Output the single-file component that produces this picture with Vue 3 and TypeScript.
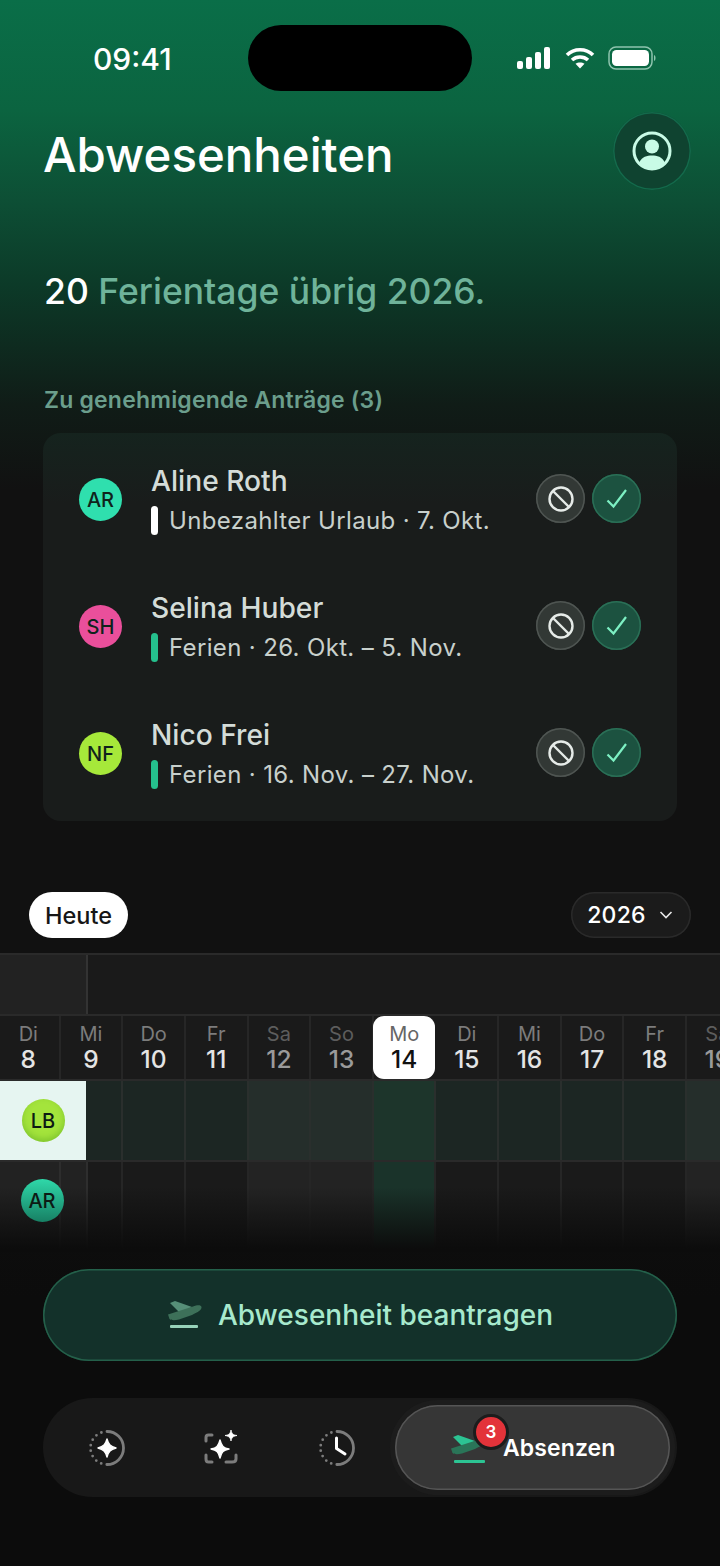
<script setup lang="ts">
interface Req { ini: string; name: string; sub: string; color: string; bar: string }
const requests: Req[] = [
  { ini: 'AR', name: 'Aline Roth', sub: 'Unbezahlter Urlaub · 7. Okt.', color: '#2fdfae', bar: '#ffffff' },
  { ini: 'SH', name: 'Selina Huber', sub: 'Ferien · 26. Okt. – 5. Nov.', color: '#ea4f9b', bar: '#25c08d' },
  { ini: 'NF', name: 'Nico Frei', sub: 'Ferien · 16. Nov. – 27. Nov.', color: '#a6e83a', bar: '#25c08d' },
]
interface Day { w: string; d: string; end?: boolean; today?: boolean }
const days: Day[] = [
  { w: 'Di', d: '8' }, { w: 'Mi', d: '9' }, { w: 'Do', d: '10' }, { w: 'Fr', d: '11' },
  { w: 'Sa', d: '12', end: true }, { w: 'So', d: '13', end: true }, { w: 'Mo', d: '14', today: true },
  { w: 'Di', d: '15' }, { w: 'Mi', d: '16' }, { w: 'Do', d: '17' }, { w: 'Fr', d: '18' }, { w: 'Sa', d: '19', end: true },
]
</script>

<template>
  <div class="page">
    <div class="status">
      <span class="time">09:41</span>
      <div class="island"></div>
      <div class="sys">
        <svg width="36" height="22" viewBox="0 0 36 22" fill="#fff"><rect x="1" y="14" width="6" height="8" rx="2"/><rect x="10" y="10" width="6" height="12" rx="2"/><rect x="19" y="5" width="6" height="17" rx="2"/><rect x="28" y="0" width="6" height="22" rx="2"/></svg>
        <svg width="30" height="22" viewBox="0 0 30 22" fill="none" stroke="#fff" stroke-width="3.6"><path d="M2 8 C9 1 21 1 28 8"/><path d="M7 13 C11.500 9 18.500 9 23 13"/><path d="M15 21.500 L10.500 16.800 C13 15 17 15 19.500 16.800 Z" fill="#fff" stroke="none"/></svg>
        <svg width="49" height="24" viewBox="0 0 49 24" fill="none"><rect x="1" y="1" width="43" height="22" rx="7" stroke="#8fc4ae" stroke-width="1.500"/><rect x="4" y="4" width="37" height="16" rx="4.500" fill="#fff"/><path d="M46 9 C48 9.500 48 14.500 46 15 Z" fill="#8fc4ae"/></svg>
      </div>
    </div>

    <header class="head">
      <h1>Abwesenheiten</h1>
      <button class="profile">
        <svg width="42" height="42" viewBox="0 0 42 42" fill="none"><circle cx="21" cy="21" r="18" stroke="#c8fbe6" stroke-width="3"/><circle cx="21" cy="16.500" r="7" fill="#c8fbe6"/><path d="M8 33 C11 26.500 16 25.500 21 25.500 C26 25.500 31 26.500 34 33 C30 37.500 25.500 39 21 39 C16.500 39 12 37.500 8 33 Z" fill="#c8fbe6"/></svg>
      </button>
    </header>

    <p class="left"><b>20</b> Ferientage übrig 2026.</p>

    <h2 class="label">Zu genehmigende Anträge (3)</h2>
    <section class="card">
      <div v-for="r in requests" :key="r.ini" class="req">
        <span class="av" :style="{ background: r.color }">{{ r.ini }}</span>
        <div class="info">
          <div class="name">{{ r.name }}</div>
          <div class="sub"><i :style="{ background: r.bar }"></i>{{ r.sub }}</div>
        </div>
        <button class="act deny">
          <svg width="28" height="28" viewBox="0 0 28 28" fill="none" stroke="#e6ebe8" stroke-width="2.400"><circle cx="14" cy="14" r="11.500"/><path d="M6 6 L22 22"/></svg>
        </button>
        <button class="act ok">
          <svg width="28" height="28" viewBox="0 0 28 28" fill="none" stroke="#7df0c3" stroke-width="2.200"><path d="M4.500 15.500 L10.500 21.500 L23 5"/></svg>
        </button>
      </div>
    </section>

    <div class="tools">
      <button class="today">Heute</button>
      <button class="year">2026
        <svg width="14" height="10" viewBox="0 0 14 10" fill="none" stroke="#e8e8e8" stroke-width="1.600"><path d="M1.500 2 L7 7.500 L12.500 2"/></svg>
      </button>
    </div>

    <section class="cal">
      <div class="cal-top"><div class="cal-corner"></div></div>
      <div class="grid head-row">
        <div v-for="d in days" :key="d.d" class="day" :class="{ end: d.end, now: d.today }">
          <span class="w">{{ d.w }}</span><span class="n">{{ d.d }}</span>
        </div>
      </div>
      <div class="row-wrap first">
        <div class="grid body-row">
          <div v-for="d in days" :key="d.d" class="cell" :class="{ end: d.end, now: d.today }"></div>
        </div>
        <div class="pin light"><span class="av small lime">LB</span></div>
      </div>
      <div class="row-wrap second">
        <div class="grid body-row">
          <div v-for="d in days" :key="d.d" class="cell" :class="{ end: d.end, now: d.today }"></div>
        </div>
        <div class="pin"><span class="av small teal">AR</span></div>
      </div>
      <div class="fade"></div>
    </section>

    <button class="cta">
      <svg width="36" height="28" viewBox="0 0 36 28" fill="none"><path d="M3 2 L8 0 L25 6 L13 12 Z" fill="#568f78"/><path d="M1 13.500 L26 5.500 C30 4 34 3.500 34.500 6 C35 9 30 11.500 25 14 L12 18.500 C8 19.500 4 19.500 2.500 18 Z" fill="#3d7059"/><rect x="3" y="24" width="28" height="3" rx="1" fill="#97d3ba"/></svg>
      Abwesenheit beantragen
    </button>

    <nav class="nav">
      <div class="tab">
        <svg width="36" height="36" viewBox="0 0 36 36" fill="none">
          <path d="M18 1.500 A16.500 16.500 0 0 1 18 34.500" stroke="#7c7c7c" stroke-width="2.800"/>
          <path d="M18 1.500 A16.500 16.500 0 0 0 18 34.500" stroke="#7c7c7c" stroke-width="2.800" stroke-linecap="round" stroke-dasharray="0 5.700"/>
          <path d="M18 9 C19.500 14.500 21.500 16.500 27 18 C21.500 19.500 19.500 21.500 18 27 C16.500 21.500 14.500 19.500 9 18 C14.500 16.500 16.500 14.500 18 9 Z" fill="#fff" stroke="#fff" stroke-width="1.400" stroke-linejoin="round"/>
        </svg>
      </div>
      <div class="tab">
        <svg width="36" height="36" viewBox="0 0 36 36" fill="none">
          <path d="M8 5 H4.500 Q2 5 2 7.500 V11 M2 25 V29 Q2 32 4.500 32 H8 M22 32 H28 Q32 32 32 29 V25" stroke="#7c7c7c" stroke-width="3" stroke-linecap="round"/>
          <path d="M16 10 C17.500 16 19.500 18 25 19 C19.500 20 17.500 22 16 28 C14.500 22 12.500 20 7 19 C12.500 18 14.500 16 16 10 Z" fill="#fff" stroke="#fff" stroke-width="1.400" stroke-linejoin="round"/>
          <path d="M27 0 C27.600 3.500 29 5 33 5.500 C29 6.200 27.600 7.500 27 11 C26.400 7.500 25 6.200 21 5.500 C25 5 26.400 3.500 27 0 Z" fill="#fff" stroke="#fff" stroke-width="0.800" stroke-linejoin="round"/>
        </svg>
      </div>
      <div class="tab">
        <svg width="36" height="36" viewBox="0 0 36 36" fill="none">
          <path d="M18 1.500 A16.500 16.500 0 0 1 18 34.500" stroke="#7c7c7c" stroke-width="2.800"/>
          <path d="M18 1.500 A16.500 16.500 0 0 0 18 34.500" stroke="#7c7c7c" stroke-width="2.800" stroke-linecap="round" stroke-dasharray="0 5.700"/>
          <path d="M17.500 8 V18.500 L26 24" stroke="#fff" stroke-width="3" stroke-linecap="round" stroke-linejoin="round"/>
        </svg>
      </div>
      <div class="tab active">
        <div class="plane">
          <svg width="36" height="30" viewBox="0 0 36 30" fill="none"><path d="M3 2 L8 0 L25 6 L13 12 Z" fill="#2cc493"/><path d="M1 13.500 L26 5.500 C30 4 34 3.500 34.500 6 C35 9 30 11.500 25 14 L12 18.500 C8 19.500 4 19.500 2.500 18 Z" fill="#2a7558"/><rect x="4" y="25" width="31" height="3" rx="1" fill="#2cc493"/></svg>
          <span class="badge">3</span>
        </div>
        <span class="tab-label">Absenzen</span>
      </div>
    </nav>
  </div>
</template>

<style>
html, body { margin: 0; background: #0c0c0c; }
</style>

<style scoped>
.page {
  width: 720px; height: 1566px; overflow: hidden; position: relative; box-sizing: border-box;
  font-family: Inter, "Noto Sans", sans-serif; color: #fff;
  background: linear-gradient(180deg, #0a6e48 0, #0b6440 110px, #0d4f35 200px, #0c3a28 285px, #101c17 405px, #111111 490px, #111111 960px, #0c0c0c 1300px);
}
button { font-family: inherit; border: 0; padding: 0; margin: 0; }

.status { height: 91px; padding-top: 25px; box-sizing: border-box; display: flex; align-items: center; position: relative; }
.time { position: absolute; left: 93px; top: 42px; font-size: 30px; line-height: 34px; font-weight: 500; }
.island { width: 224px; height: 66px; margin-left: 248px; border-radius: 33px; background: #000; }
.sys { margin-left: 44px; display: flex; align-items: center; gap: 13px; margin-top: -1px; }

.head { display: flex; justify-content: space-between; align-items: center; padding: 21px 29px 0 43px; height: 77px; }
h1 { margin: 0; font-size: 47.400px; line-height: 56px; font-weight: 500; position: relative; top: 4px; }
.profile { width: 78px; height: 78px; border-radius: 50%; background: #0f4330; box-shadow: inset 0 0 0 1.500px #136a4b; display: flex; align-items: center; justify-content: center; }

.left { margin: 81px 0 0 44px; font-size: 35.500px; line-height: 44px; color: #6fb39a; font-weight: 500; }
.left b { color: #fff; font-weight: 500; }
.label { margin: 72px 0 0 44px; font-size: 23px; line-height: 28px; font-weight: 600; color: #6b9e8c; letter-spacing: 0.200px; }

.card { margin: 19px 43px 0; height: 388px; box-sizing: border-box; padding: 3px 36px 0; border-radius: 18px; background: linear-gradient(180deg, #15231e 0, #191c1b 70px); }
.req { height: 127px; display: flex; align-items: center; }
.av { width: 43px; height: 43px; border-radius: 50%; display: flex; align-items: center; justify-content: center; font-size: 20px; font-weight: 500; color: #10231c; flex: none; }
.info { flex: 1; margin-left: 29px; margin-top: 2px; }
.name { font-size: 28.200px; line-height: 34px; font-weight: 500; color: #d4dcd8; position: relative; top: -1px; }
.sub { font-size: 24px; line-height: 32px; color: #c8d0cc; margin-top: 6px; display: flex; align-items: center; letter-spacing: 0.350px; }
.sub i { width: 7px; height: 29px; border-radius: 3.500px; margin-right: 11px; }
.act { width: 49px; height: 49px; border-radius: 50%; display: flex; align-items: center; justify-content: center; flex: none; margin-top: -2px; }
.deny { background: #323835; box-shadow: inset 0 0 0 1.500px #4f5552; margin-right: 7px; }
.ok { background: #1c5240; box-shadow: inset 0 0 0 1.500px #2a6f56; }

.tools { display: flex; justify-content: space-between; padding: 71px 29px 0; }
.today { width: 99px; height: 46px; border-radius: 23px; background: #fff; color: #161616; font-size: 23.500px; font-weight: 500; }
.year { width: 120px; height: 46px; border-radius: 23px; background: #1b1b1b; box-shadow: inset 0 0 0 1.500px #2a2a2a; color: #fff; font-size: 23px; font-weight: 500; display: flex; align-items: center; justify-content: center; gap: 13px; padding-right: 2px; box-sizing: border-box; letter-spacing: 0.200px; }

.cal { margin-top: 15px; border-top: 2px solid #2a2a2a; position: relative; height: 297px; overflow: hidden; background: #1a1a1a; }
.cal-top { height: 59px; border-bottom: 2px solid #2a2a2a; }
.cal-corner { width: 86px; height: 59px; background: #222222; border-right: 2px solid #333; }
.grid { display: grid; grid-template-columns: repeat(12, 62.650px); margin-left: -2px; width: 752px; }
.head-row { height: 63px; }
.day { display: flex; flex-direction: column; align-items: center; border-right: 2px solid #262626; box-sizing: border-box; padding-top: 6px; }
.day .w { font-size: 20px; line-height: 24px; color: #7c7c7c; }
.day .n { font-size: 24.500px; line-height: 28px; font-weight: 500; color: #e4e4e4; margin-top: -1px; }
.day.end .w { color: #5d5d5d; }
.day.end .n { color: #9a9a9a; }
.day.now { background: #fff; border-radius: 11px; border: 0; margin-right: 1px; margin-left: -1px; }
.day.now .w { color: #666; }
.day.now .n { color: #111; }

.row-wrap { position: relative; border-top: 2px solid #2a2a2a; }
.body-row { height: 79px; }
.second .body-row { height: 90px; }
.cell { border-right: 2px solid #2a2f2d; background: #1c2623; }
.cell.end { background: #252e2b; }
.cell.now { background: #1d352b; }
.second .cell { background: #1a1a1a; border-right-color: #262626; }
.second .cell.end { background: #232323; }
.second .cell.now { background: #1a332a; }
.pin { position: absolute; left: 0; top: 0; width: 86px; height: 79px; display: flex; align-items: center; justify-content: center; background: rgba(255,255,255,0.035); }
.pin.light { background: #e6f5f1; }
.small { color: #0d1a14; position: relative; z-index: 2; }
.second .pin { width: 88px; height: 90px; align-items: flex-start; padding: 17px 2px 0 0; box-sizing: border-box; border-right: 2px solid #2e2e2e; }
.lime { background: #a4e43c; box-shadow: inset 0 -3px 6px rgba(60,140,20,0.35); }
.teal { background: linear-gradient(180deg, #2fd8a9, #178064); }
.fade { position: absolute; left: 0; right: 0; top: 232px; height: 65px; background: linear-gradient(180deg, rgba(12,12,12,0), #0c0c0c 95%); pointer-events: none; }

.cta { display: flex; align-items: center; justify-content: center; gap: 15px; margin: 17px 43px 0; width: 634px; height: 92px; border-radius: 46px; background: #13312a; box-shadow: inset 0 0 0 1.500px #24604a; color: #a7e9cd; font-size: 28px; font-weight: 500; }

.nav { margin: 37px 43px 0; height: 99px; border-radius: 50px; background: #181818; display: flex; align-items: center; padding: 0 7px 0 0; box-sizing: border-box; }
.tab { display: flex; align-items: center; justify-content: center; flex: none; }
.tab:first-child { width: 128px; }
.tab:nth-child(2) { width: 102px; }
.tab:nth-child(3) { width: 127px; margin-right: -5px; }
.tab.active { width: 275px; height: 85px; border-radius: 43px; background: #363636; box-shadow: inset 0 0 0 1.500px #555, 0 0 0 5px #1c1c1c; justify-content: flex-start; padding-left: 55px; box-sizing: border-box; }
.plane { position: relative; width: 53px; height: 30px; margin-top: 4px; }
.badge { position: absolute; left: 23px; top: -21px; width: 30px; height: 30px; border-radius: 50%; background: #e3333a; border: 3px solid #1c1c1c; color: #fff; font-size: 17px; font-weight: 600; display: flex; align-items: center; justify-content: center; }
.tab-label { font-size: 23px; font-weight: 600; color: #fff; letter-spacing: 0.100px; }
</style>
